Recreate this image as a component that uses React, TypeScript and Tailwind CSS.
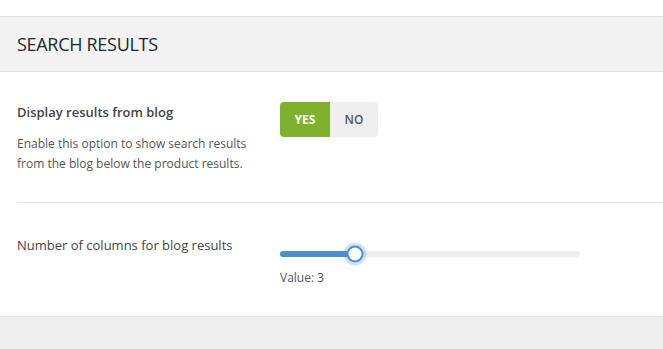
import React from "react";

function YesNo() {
  return (
    <div className="flex h-[35px] w-[98px] overflow-hidden rounded-[4px] text-[12px]">
      <div className="flex w-[50px] items-center justify-center bg-[#7fb12e] font-bold text-white">YES</div>
      <div className="flex w-[48px] items-center justify-center bg-[#eeeeee] font-semibold text-[#555]">NO</div>
    </div>
  );
}

function Slider({ value, min, max }: { value: number; min: number; max: number }) {
  const pct = ((value - min) / (max - min)) * 100;
  return (
    <div className="relative h-[6px] w-[300px] rounded-full bg-[#eeeeee]">
      <div className="h-full rounded-full bg-[#4a8fd0]" style={{ width: `${pct}%` }} />
      <div
        className="absolute top-1/2 h-[17px] w-[17px] -translate-x-1/2 -translate-y-1/2 rounded-full border-2 border-[#4a8fd0] bg-white shadow-[0_0_0_3px_rgba(74,143,208,0.25)]"
        style={{ left: `${pct}%` }}
      />
    </div>
  );
}

export default function App() {
  return (
    <div className="min-h-[349px] bg-white pt-4" style={{ fontFamily: '"Open Sans", "Noto Sans", sans-serif' }}>
      {/* header */}
      <div className="flex h-[56px] items-center border-y border-[#e2e2e2] bg-[#f2f2f2] px-[17px]">
        <h2 className="text-[18px] font-medium tracking-[-0.3px] text-[#23282d]">SEARCH RESULTS</h2>
      </div>

      {/* display results from blog */}
      <div className="pl-[17px]">
        <div className="flex border-b border-[#e8e8e8] pb-[28px] pt-[30px]">
          <div className="w-[263px]">
            <div className="mt-[1px] text-[13px] font-semibold text-[#444]">Display results from blog</div>
            <p className="mt-[11px] w-[248px] text-[12px] leading-[20px] text-[#555]">
              Enable this option to show search results from the blog below the product results.
            </p>
          </div>
          <YesNo />
        </div>
      </div>

      {/* columns */}
      <div className="flex h-[114px] border-b border-[#e2e2e2] pl-[17px] pt-[33px]">
        <div className="w-[263px] text-[13px] font-medium text-[#444]">Number of columns for blog results</div>
        <div className="pt-[15px]">
          <Slider value={3} min={1} max={9} />
          <div className="mt-[12px] text-[12px] text-[#555]">Value: 3</div>
        </div>
      </div>

      <div className="h-[33px] bg-[#eeeeee]" />
    </div>
  );
}
